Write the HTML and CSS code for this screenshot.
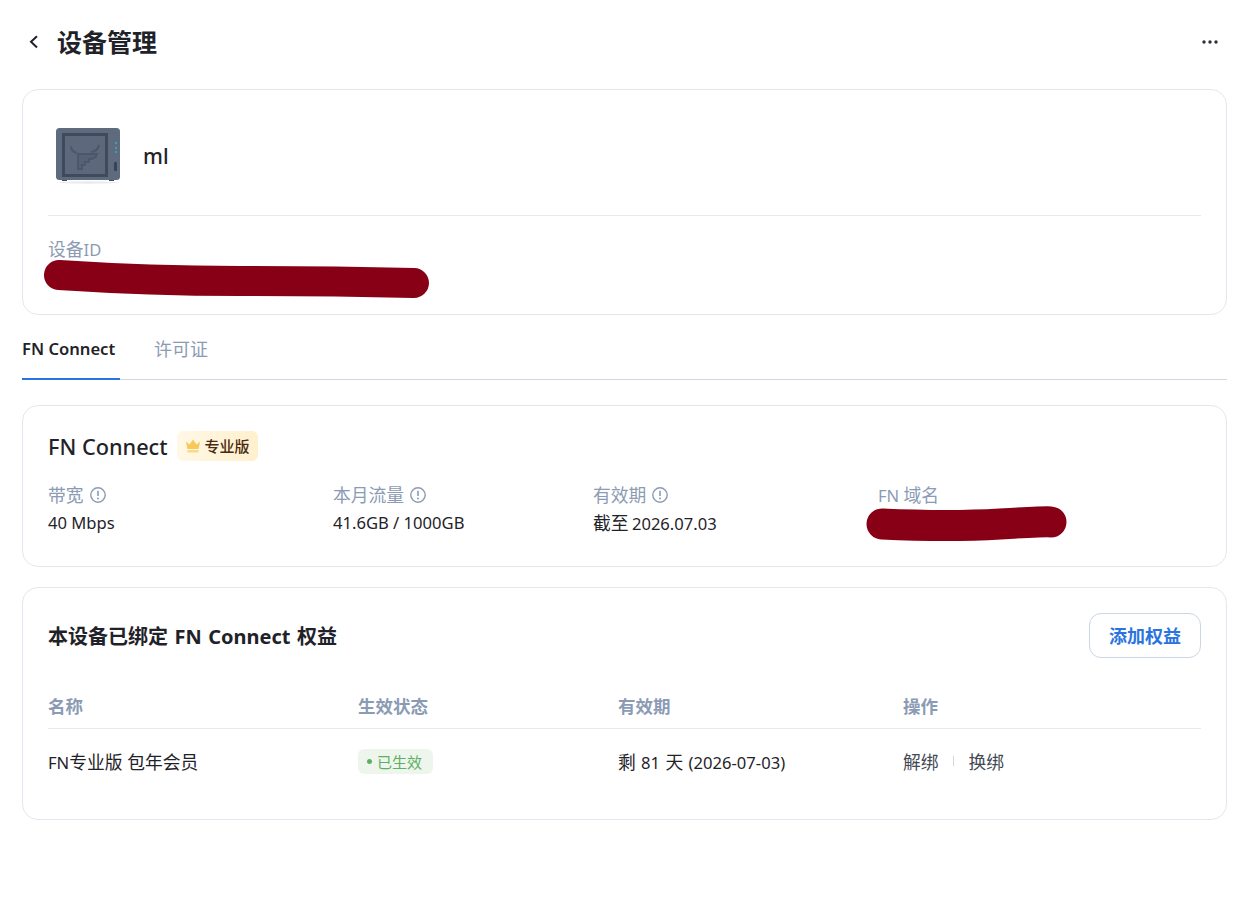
FILE: index.html
```html
<!DOCTYPE html>
<html lang="zh-CN">
<head>
<meta charset="utf-8">
<title>设备管理</title>
<link rel="stylesheet" href="styles.css">
</head>
<body>
<div class="page">
  <header class="top">
    <svg class="back" width="12" height="16" viewBox="0 0 12 16"><path d="M9 2.2 L3 7.8 L9 13.4" fill="none" stroke="#1f2329" stroke-width="2"/></svg>
    <h1 class="title">设备管理</h1>
    <svg class="more" width="16" height="4" viewBox="0 0 16 4"><circle cx="2" cy="2" r="1.7" fill="#2a2f38"/><circle cx="8" cy="2" r="1.7" fill="#2a2f38"/><circle cx="14" cy="2" r="1.7" fill="#2a2f38"/></svg>
  </header>

  <section class="card device">
    <div class="device-head">
      <svg class="nas" width="64" height="56" viewBox="0 0 64 56">
        <ellipse cx="32" cy="54.5" rx="29" ry="1.2" fill="#e8eaed"/>
        <rect x="6" y="50" width="5" height="3" fill="#3f4958"/>
        <rect x="53" y="50" width="5" height="3" fill="#3f4958"/>
        <rect x="0" y="0" width="64" height="52" rx="3.5" fill="#5e6a7e"/>
        <rect x="6" y="5" width="46" height="44" fill="#3f4a5a"/>
        <rect x="9" y="8" width="40" height="38" fill="#5c687c"/>
        <path d="M15 18 Q15 24 21 25 M43 17 Q42 23 35 24" fill="none" stroke="#4c576a" stroke-width="2"/>
        <path d="M22 26 H41 Q39.500 31 35 31 H33 V34 H29 V37 H26 V41 H22 Z" fill="#556175" stroke="#4c576a" stroke-width="1.800"/>
        <circle cx="60" cy="15" r="1" fill="#2fb6bd"/>
        <circle cx="60" cy="20" r="1" fill="#2fb6bd"/>
        <circle cx="60" cy="24" r="1" fill="#2fb6bd"/>
        <rect x="58" y="34" width="3" height="9" rx="1" fill="#3a4352"/>
      </svg>
      <span class="device-name">ml</span>
    </div>
    <div class="device-id"><span class="zh">设备</span>ID</div>
  </section>

  <nav class="tabs">
    <a class="tab tab-active">FN Connect</a>
    <a class="tab tab-zh">许可证</a>
  </nav>

  <section class="card connect">
    <div class="connect-head">
      <h2 class="connect-title">FN Connect</h2>
      <span class="pro">
        <svg width="16" height="14" viewBox="0 0 16 14"><path d="M1 2.5 L4.5 5.5 L8 0.5 L11.5 5.5 L15 2.5 L13.6 10 H2.4 Z" fill="#f8c85a"/><rect x="2.4" y="11" width="11.2" height="2.4" rx="0.6" fill="#f6d98c"/></svg>
        <span class="pro-text">专业版</span>
      </span>
    </div>
    <div class="stats">
      <div class="stat stat-a">
        <div class="label"><span class="zh">带宽</span><svg class="info" width="16" height="16" viewBox="0 0 16 16"><circle cx="8" cy="8" r="7.2" fill="none" stroke="#8b9bb4" stroke-width="1.4"/><path d="M8 3.8 V9" stroke="#8b9bb4" stroke-width="1.6"/><circle cx="8" cy="11.4" r="1" fill="#8b9bb4"/></svg></div>
        <div class="value">40 Mbps</div>
      </div>
      <div class="stat stat-b">
        <div class="label"><span class="zh">本月流量</span><svg class="info" width="16" height="16" viewBox="0 0 16 16"><circle cx="8" cy="8" r="7.2" fill="none" stroke="#8b9bb4" stroke-width="1.4"/><path d="M8 3.8 V9" stroke="#8b9bb4" stroke-width="1.6"/><circle cx="8" cy="11.4" r="1" fill="#8b9bb4"/></svg></div>
        <div class="value">41.6GB / 1000GB</div>
      </div>
      <div class="stat stat-a">
        <div class="label"><span class="zh">有效期</span><svg class="info" width="16" height="16" viewBox="0 0 16 16"><circle cx="8" cy="8" r="7.2" fill="none" stroke="#8b9bb4" stroke-width="1.4"/><path d="M8 3.8 V9" stroke="#8b9bb4" stroke-width="1.6"/><circle cx="8" cy="11.4" r="1" fill="#8b9bb4"/></svg></div>
        <div class="value value-date"><span class="zh">截至</span> 2026.07.03</div>
      </div>
      <div class="stat">
        <div class="label"><span>FN <span class="zh">域名</span></span></div>
        <div class="value">&nbsp;</div>
      </div>
    </div>
  </section>

  <section class="card rights">
    <div class="rights-head">
      <h2 class="rights-title">本设备已绑定 FN Connect 权益</h2>
      <button class="add">添加权益</button>
    </div>
    <div class="row row-head">
      <div class="col-name">名称</div>
      <div class="col-state">生效状态</div>
      <div class="col-exp">有效期</div>
      <div>操作</div>
    </div>
    <div class="row row-body">
      <div class="col-name">FN<span class="zh">专业版 包年会员</span></div>
      <div class="col-state"><span class="status"><i class="dot"></i>已生效</span></div>
      <div class="col-exp cell-exp"><span class="zh">剩</span> 81 <span class="zh">天</span> (2026-07-03)</div>
      <div class="ops"><span class="zh">解绑</span><i class="sep"></i><span class="zh">换绑</span></div>
    </div>
  </section>
</div>

<svg class="redact" width="1247" height="907" viewBox="0 0 1247 907">
  <path d="M59 275 Q150 281 240 281 T414 283" fill="none" stroke="#880015" stroke-width="30" stroke-linecap="round"/>
  <path d="M882 524 Q950 527 1000 524 T1051 522" fill="none" stroke="#880015" stroke-width="31" stroke-linecap="round"/>
</svg>
</body>
</html>
```

FILE: styles.css
```css
* { box-sizing: border-box; }
html, body { margin: 0; padding: 0; background: #fff; }
body {
  font-family: "Noto Sans", "Noto Sans CJK SC", sans-serif;
  color: #1f2329;
  font-size: 16.6px;
}
.zh { font-size: 17.8px; }
.page { padding: 0 20px 0 22px; }

.top { height: 89px; display: flex; align-items: center; padding-bottom: 5px; }
.back { margin-left: 6px; }
.title { margin: 0 0 0 17px; font-size: 25px; font-weight: 700; line-height: 34px; flex: 1; }
.more { margin-right: 9px; }

.card { border: 1px solid #e3e8f0; border-radius: 16px; background: #fff; padding: 0 25px; }

.device { height: 226px; }
.device-head { height: 126px; border-bottom: 1px solid #e6e9ef; display: flex; align-items: center; padding: 6px 0 0 8px; }
.device-name { margin-left: 23px; font-size: 21px; font-weight: 500; }
.device-id { margin-top: 21px; line-height: 24px; color: #8b9bb4; }

.tabs { height: 65px; border-bottom: 1px solid #cfd7e3; display: flex; gap: 34px; align-items: stretch; margin-bottom: 25px; }
.tab { display: flex; align-items: center; color: #8b9bb4; padding-top: 2px; }
.tab-zh { font-size: 18px; }
.tab-active { color: #1f2329; font-weight: 600; width: 98px; border-bottom: 2px solid #2a74e0; margin-bottom: -1px; padding-top: 3px; }

.connect { height: 162px; margin-bottom: 20px; }
.connect-head { display: flex; align-items: center; gap: 9px; padding-top: 25px; height: 55px; }
.connect-title { margin: 0; font-size: 21.7px; font-weight: 500; line-height: 30px; padding-top: 2px; }
.pro {
  display: inline-flex; align-items: center; gap: 4px; height: 30px; padding: 0 8px;
  border-radius: 6px; background: linear-gradient(90deg, #fff8e6, #fff0cd);
  color: #4a2a10; font-size: 15px; font-weight: 500;
}
.pro-text { margin-top: -2px; }
.stats { display: flex; margin-top: 22px; }
.stat-a { width: 285px; }
.stat-b { width: 260px; }
.label { display: flex; align-items: center; gap: 6px; color: #8b9bb4; line-height: 24px; }
.value { line-height: 24px; margin-top: 4px; }
.value-date { word-spacing: -1px; }

.rights { height: 233px; }
.rights-head { display: flex; align-items: center; justify-content: space-between; height: 94px; margin-bottom: 4px; }
.rights-title { margin: 0; font-size: 20px; font-weight: 700; word-spacing: 1.3px; }
.add {
  width: 112px; height: 45px; border: 1px solid #ccd5e3; border-radius: 12px; background: #fff;
  color: #2a74e0; font-family: inherit; font-size: 18px; font-weight: 700;
}
.row { display: flex; align-items: center; }
.row-head { height: 43px; border-bottom: 1px solid #e6e9ef; color: #8b9bb4; font-size: 17.5px; font-weight: 700; padding-bottom: 3px; }
.row-body { height: 65px; padding-bottom: 1px; }
.col-name { width: 310px; }
.col-state { width: 260px; display: flex; }
.col-exp { width: 285px; }
.cell-exp { word-spacing: 1px; }
.status {
  display: inline-flex; align-items: center; gap: 5px; height: 25px; width: 75px; padding-left: 9px; margin-top: 1px;
  border-radius: 6px; background: #edf5ed; color: #5cb060; font-size: 15px;
}
.dot { width: 5px; height: 5px; border-radius: 50%; background: #5cb060; }
.ops { display: flex; align-items: center; color: #444a55; }
.sep { width: 1px; height: 10px; background: #d3d8e0; margin: 0 15px 0 14px; }

.redact { position: absolute; left: 0; top: 0; pointer-events: none; }
```
